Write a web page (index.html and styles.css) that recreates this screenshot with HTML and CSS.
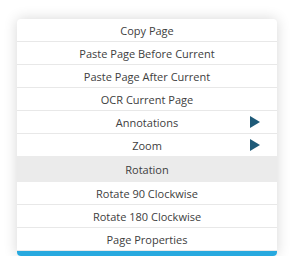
FILE: index.html
```html
<!DOCTYPE html>
<html>
<head>
<meta charset="utf-8">
<link rel="stylesheet" href="styles.css">
</head>
<body>
<div class="menu">
  <div class="item">Copy Page</div>
  <div class="item">Paste Page Before Current</div>
  <div class="item">Paste Page After Current</div>
  <div class="item">OCR Current Page</div>
  <div class="item sub">Annotations<span class="arrow"></span></div>
  <div class="item sub">Zoom<span class="arrow"></span></div>
  <div class="item active">Rotation</div>
  <div class="item">Rotate 90 Clockwise</div>
  <div class="item">Rotate 180 Clockwise</div>
  <div class="item">Page Properties</div>
  <div class="bar"></div>
</div>
</body>
</html>
```
FILE: styles.css
```css
html, body {
  margin: 0;
  padding: 0;
  background: #ffffff;
}
body {
  padding: 19px 18px 0 17px;
  font-family: "Open Sans", "Lato", sans-serif;
}
.menu {
  width: 260px;
  background: #ffffff;
  border-radius: 4px;
  box-shadow: 0 0 14px rgba(0, 0, 0, 0.16);
  overflow: hidden;
}
.item {
  position: relative;
  height: 22px;
  line-height: 24px;
  border-bottom: 1px solid #e8e8e8;
  text-align: center;
  font-size: 11px;
  color: #404040;
}
.item.active {
  background: #ebebeb;
  border-bottom-color: #ebebeb;
  height: 24px;
  line-height: 26px;
  margin-top: -1px;
  border-top: 1px solid #ebebeb;
}
.arrow {
  position: absolute;
  right: 17px;
  top: 5px;
  width: 0;
  height: 0;
  border-top: 6px solid transparent;
  border-bottom: 6px solid transparent;
  border-left: 10px solid #1e5a78;
}
.bar {
  height: 5px;
  background: #28a9df;
}
```
